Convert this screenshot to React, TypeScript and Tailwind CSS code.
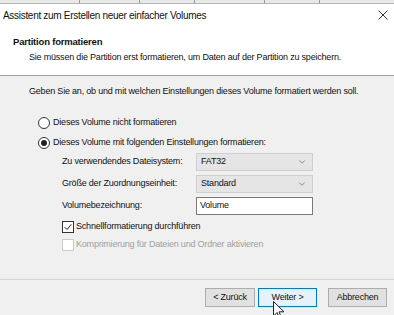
import { ChevronDown } from "lucide-react";

function Radio({ checked, label }: { checked?: boolean; label: string }) {
  return (
    <div className="flex h-[20px] items-center">
      <span className="flex h-[12px] w-[12px] items-center justify-center rounded-full border border-[#333] bg-white">
        {checked && <span className="h-[6px] w-[6px] rounded-full bg-[#222]" />}
      </span>
      <span className="ml-[3px]">{label}</span>
    </div>
  );
}

function Select({ value }: { value: string }) {
  return (
    <div className="flex h-[18px] w-[117px] items-center justify-between border border-[#cfcfcf] bg-[#e5e5e5] pl-[4px] pr-[5px]">
      <span>{value}</span>
      <ChevronDown className="h-[10px] w-[10px] text-[#555]" strokeWidth={1.5} />
    </div>
  );
}

function Field({ label, children }: { label: string; children: React.ReactNode }) {
  return (
    <div className="flex h-[22px] items-center">
      <span className="w-[134px]">{label}</span>
      {children}
    </div>
  );
}

function Checkbox({ checked, disabled, label }: { checked?: boolean; disabled?: boolean; label: string }) {
  return (
    <div className={`flex h-[18px] items-center ${disabled ? "text-[#a0a0a0]" : ""}`}>
      <span
        className={`flex h-[12px] w-[12px] items-center justify-center border bg-white ${
          disabled ? "border-[#cccccc]" : "border-[#333]"
        }`}
      >
        {checked && (
          <svg viewBox="0 0 12 12" className="h-[10px] w-[10px]" fill="none" stroke="#222" strokeWidth={1.2}>
            <path d="M2 6.2 L4.8 9 L10 2.8" />
          </svg>
        )}
      </span>
      <span className="ml-[2px]">{label}</span>
    </div>
  );
}

export default function App() {
  return (
    <div className="flex h-[315px] w-[394px] flex-col overflow-hidden bg-[#f0f0f0] font-['Liberation_Sans',Arial,sans-serif] text-[9px] tracking-[-0.2px] text-[#111]">
      {/* background window strip */}
      <div className="flex h-[4px] shrink-0 border-b border-[#b5b5b5] bg-[#e9e9e9]">
        <div className="w-[80px] border-r border-[#999]" />
        <div className="w-[60px] border-r border-[#999]" />
        <div className="w-[55px] border-r border-[#999]" />
        <div className="w-[70px] border-r border-[#999]" />
        <div className="w-[55px] border-r border-[#999]" />
      </div>

      {/* Title bar */}
      <div className="flex h-[22px] shrink-0 items-center justify-between bg-white pl-[3px] pr-[6px] text-[10px] tracking-[-0.3px]">
        <span>Assistent zum Erstellen neuer einfacher Volumes</span>
        <svg viewBox="0 0 10 10" className="h-[10px] w-[10px]" fill="none" stroke="#333" strokeWidth={1}>
          <path d="M0.5 0.5 L9.5 9.5 M9.5 0.5 L0.5 9.5" />
        </svg>
      </div>

      {/* Header */}
      <div className="flex h-[50px] shrink-0 flex-col border-b border-[#a0a0a0] bg-white pl-[13px] pt-[9px]">
        <span className="text-[9.5px] font-bold">Partition formatieren</span>
        <span className="ml-[16px] mt-[2px]">
          Sie müssen die Partition erst formatieren, um Daten auf der Partition zu speichern.
        </span>
      </div>

      {/* Body */}
      <div className="flex flex-1 flex-col">
        <p className="pl-[29px] pt-[9px]">
          Geben Sie an, ob und mit welchen Einstellungen dieses Volume formatiert werden soll.
        </p>
        <div className="mt-[14px] pl-[38px]">
          <Radio label="Dieses Volume nicht formatieren" />
          <Radio checked label="Dieses Volume mit folgenden Einstellungen formatieren:" />
        </div>
        <div className="-mt-[2px] pl-[62px]">
          <Field label="Zu verwendendes Dateisystem:">
            <Select value="FAT32" />
          </Field>
          <Field label="Größe der Zuordnungseinheit:">
            <Select value="Standard" />
          </Field>
          <Field label="Volumebezeichnung:">
            <div className="flex h-[18px] w-[117px] items-center border border-[#7a7a7a] bg-white pl-[3px]">
              Volume
            </div>
          </Field>
          <div className="mt-[1px]">
            <Checkbox checked label="Schnellformatierung durchführen" />
            <Checkbox disabled label="Komprimierung für Dateien und Ordner aktivieren" />
          </div>
        </div>
      </div>

      {/* Footer */}
      <div className="flex h-[36px] shrink-0 items-center justify-end gap-[3px] border-t border-[#d5d5d5] pr-[7px]">
        <button className="h-[19px] w-[50px] border border-[#adadad] bg-[#e1e1e1]">&lt; Zurück</button>
        <button className="relative h-[19px] w-[59px] border border-[#0078d7] bg-[#e5f1fb]">
          Weiter &gt;
          {/* mouse pointer */}
          <svg
            viewBox="0 0 12 19"
            className="absolute left-[14px] top-[12px] h-[19px] w-[12px]"
            fill="#fff"
            stroke="#222"
            strokeWidth={1}
            strokeLinejoin="round"
          >
            <path d="M0.5 0.5 L0.5 15 L4 11.5 L6.5 17.5 L8.5 16.7 L6 10.8 L11 10.8 Z" />
          </svg>
        </button>
        <button className="ml-[8px] h-[19px] w-[59px] border border-[#adadad] bg-[#e1e1e1]">Abbrechen</button>
      </div>
    </div>
  );
}
